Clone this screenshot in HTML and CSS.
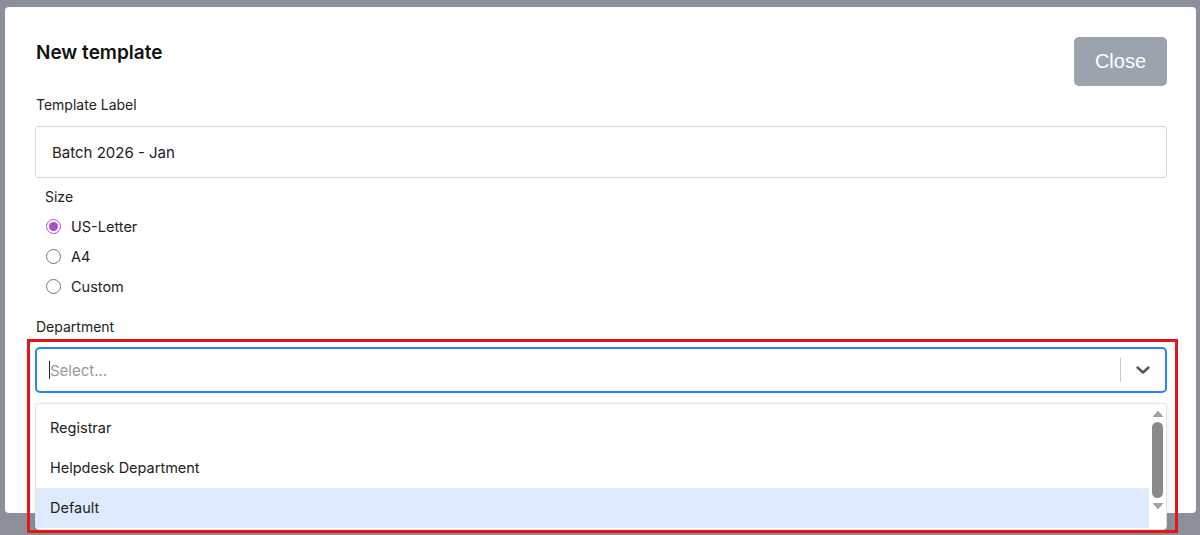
FILE: index.html
```html
<!DOCTYPE html>
<html>
<head>
    <meta charset="utf-8">
    <meta name="viewport" content="width=device-width, initial-scale=1.0">
    <title>New template</title>
    <link rel="stylesheet" href="styles.css">
</head>
<body>
    <div class="modal">
        <div class="modal-header">
            <h2>New template</h2>
            <button class="close-btn" type="button">Close</button>
        </div>

        <label class="field-label" for="label">Template Label</label>
        <input class="text-input" id="label" type="text" value="Batch 2026 - Jan" autocomplete="off">

        <div class="size-group">
            <div class="group-title">Size</div>
            <label class="radio-row"><input type="radio" name="size" checked> US-Letter</label>
            <label class="radio-row"><input type="radio" name="size"> A4</label>
            <label class="radio-row"><input type="radio" name="size"> Custom</label>
        </div>

        <div class="field-label dept-label">Department</div>
        <div class="select-wrap">
            <div class="select-control">
                <div class="select-value"><span class="caret"></span>Select...</div>
                <span class="select-sep"></span>
                <div class="select-arrow">
                    <svg viewBox="0 0 20 20" width="20" height="20">
                        <path d="M4.5 7.5 L10 12.5 L15.5 7.5" fill="none" stroke="#555" stroke-width="2.4" stroke-linecap="round" stroke-linejoin="round"/>
                    </svg>
                </div>
            </div>

            <div class="select-menu">
                <div class="menu-list">
                    <div class="menu-option">Registrar</div>
                    <div class="menu-option">Helpdesk Department</div>
                    <div class="menu-option focused">Default</div>
                </div>
                <div class="fake-scroll">
                    <svg class="scroll-arrow" viewBox="0 0 16 12" width="16" height="12"><path d="M2.5 10 L8 3.5 L13.5 10 Z" fill="#a3a3a3"/></svg>
                    <div class="scroll-thumb"></div>
                    <svg class="scroll-arrow" viewBox="0 0 16 12" width="16" height="12"><path d="M2.5 2 L8 8.5 L13.5 2 Z" fill="#a3a3a3"/></svg>
                </div>
            </div>

            <div class="highlight-box"></div>
        </div>
    </div>
</body>
</html>
```

FILE: styles.css
```css
html, body {
    margin: 0;
    padding: 0;
}
body {
    background: #8a8f99;
    height: 535px;
    overflow: hidden;
    font-family: Inter, "Noto Sans", sans-serif;
    color: #1f1f1f;
}
.modal {
    box-sizing: border-box;
    margin: 7px 4px 0 5px;
    height: 506px;
    background: #fff;
    border-radius: 4px;
    padding: 30px 29px 0 30px;
}
.modal-header {
    display: flex;
    justify-content: space-between;
    align-items: flex-start;
}
.modal-header h2 {
    margin: 4px 0 0 1px;
    font-size: 19px;
    line-height: 24px;
    font-weight: 600;
    color: #111;
}
.close-btn {
    width: 93px;
    height: 49px;
    border: none;
    border-radius: 5px;
    background: #9aa3ae;
    color: #fff;
    font-family: "Liberation Sans", Arial, sans-serif;
    font-size: 20px;
    cursor: pointer;
}
.field-label {
    display: block;
    margin: 9px 0 0 1px;
    font-size: 14px;
    line-height: 20px;
    color: #222;
}
.text-input {
    display: block;
    box-sizing: border-box;
    width: 100%;
    height: 52px;
    margin-top: 11px;
    padding: 0 16px;
    border: 1px solid #d2d6dc;
    border-radius: 3px;
    font-family: Inter, "Noto Sans", sans-serif;
    font-size: 15px;
    color: #222;
    outline: none;
}
.size-group {
    padding: 9px 0 0 10px;
}
.group-title {
    font-size: 14px;
    line-height: 20px;
    color: #222;
}
.radio-row {
    display: flex;
    align-items: center;
    height: 30px;
    font-size: 14.5px;
    color: #222;
}
.radio-row:first-of-type {
    margin-top: 4px;
}
.radio-row input {
    width: 15px;
    height: 15px;
    margin: 0 10px 0 1px;
    accent-color: #ab4fc8;
}
.dept-label {
    margin-top: 16px;
}
.select-wrap {
    position: relative;
    margin-top: 10px;
}
.select-control {
    box-sizing: border-box;
    display: flex;
    align-items: center;
    height: 46px;
    border: 2px solid #2684ff;
    border-radius: 5px;
    background: #fff;
}
.select-value {
    flex: 1;
    padding-left: 12px;
    font-size: 15px;
    color: #999;
    display: flex;
    align-items: center;
}
.caret {
    display: inline-block;
    width: 1px;
    height: 18px;
    background: #222;
}
.select-sep {
    width: 1px;
    height: 24px;
    background: #ccc;
}
.select-arrow {
    width: 44px;
    display: flex;
    justify-content: center;
    align-items: center;
}
.select-menu {
    position: absolute;
    top: 56px;
    left: 0;
    right: 0;
    height: 127px;
    box-sizing: border-box;
    display: flex;
    background: #fff;
    border: 1px solid #e3e3e3;
    border-radius: 4px;
    box-shadow: 0 2px 6px rgba(0, 0, 0, 0.08);
    overflow: hidden;
}
.menu-list {
    flex: 1;
    padding-top: 4px;
}
.menu-option {
    height: 40px;
    line-height: 40px;
    padding-left: 14px;
    font-size: 14.5px;
    color: #222;
}
.menu-option.focused {
    background: #deebff;
}
.fake-scroll {
    width: 17px;
    display: flex;
    flex-direction: column;
    align-items: center;
    padding: 3px 0 4px;
}
.scroll-arrow {
    display: block;
}
.scroll-thumb {
    width: 11px;
    height: 76px;
    margin: 3px 0;
    border-radius: 6px;
    background: #8a8a8a;
}
.highlight-box {
    position: absolute;
    top: -8px;
    left: -8px;
    right: -11px;
    height: 194px;
    box-sizing: border-box;
    border: 3px solid #e3161d;
    pointer-events: none;
}
```
